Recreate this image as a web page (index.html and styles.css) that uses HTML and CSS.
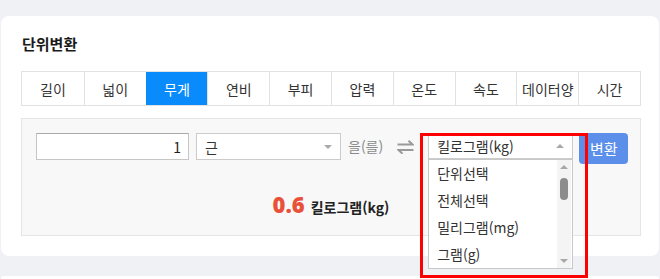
FILE: index.html
```html
<!DOCTYPE html>
<html lang="ko">
<head>
  <meta charset="UTF-8">
  <meta name="viewport" content="width=device-width, initial-scale=1">
  <title>단위변환</title>
  <link rel="stylesheet" href="styles.css">
</head>
<body>
  <section class="card">
    <h2 class="card-title">단위변환</h2>
    <nav class="tabs">
      <a href="#">길이</a>
      <a href="#">넓이</a>
      <a href="#" class="active">무게</a>
      <a href="#">연비</a>
      <a href="#">부피</a>
      <a href="#">압력</a>
      <a href="#">온도</a>
      <a href="#">속도</a>
      <a href="#">데이터양</a>
      <a href="#">시간</a>
    </nav>
    <div class="converter">
      <div class="row">
        <input class="num" type="text" value="1">
        <div class="pick from">
          <span>근</span>
          <i class="arrow down"></i>
        </div>
        <span class="josa">을(를)</span>
        <svg class="swap" width="17" height="14" viewBox="0 0 17 14">
          <path d="M0.5 4.5h15L11.5 0.8" fill="none" stroke="#9a9a9a" stroke-width="2"/>
          <path d="M16.5 10H1.5l4 3.7" fill="none" stroke="#9a9a9a" stroke-width="2"/>
        </svg>
        <div class="pick to">
          <span>킬로그램(kg)</span>
          <i class="arrow up"></i>
          <ul class="listbox">
            <li>단위선택</li>
            <li>전체선택</li>
            <li>밀리그램(mg)</li>
            <li>그램(g)</li>
          </ul>
          <div class="scroll">
            <i class="arrow up"></i>
            <b class="thumb"></b>
            <i class="arrow down"></i>
          </div>
        </div>
        <button class="btn">변환</button>
      </div>
      <p class="result"><strong>0.6</strong> 킬로그램(kg)</p>
    </div>
  </section>
  <section class="card next"></section>
  <div class="mark"></div>
</body>
</html>
```

FILE: styles.css
```css
body { margin: 0; background: #f0f1f5; font-family: "Noto Sans CJK KR", "Liberation Sans", sans-serif; color: #222; position: relative; }
.card { margin: 16px 1px 0; background: #fff; border-radius: 8px; padding: 16px 18px 20px 20px; }
.card.next { margin-top: 20px; height: 3px; padding: 0; border-radius: 8px 8px 0 0; }
.card-title { margin: 0 0 15px 1px; font-size: 15px; line-height: 24px; font-weight: 700; color: #1a1a1a; }
.tabs { display: grid; grid-template-columns: repeat(10, 1fr); height: 35px; border: 1px solid #e2e2e2; box-sizing: border-box; }
.tabs a { display: flex; align-items: center; justify-content: center; font-size: 14px; color: #333; text-decoration: none; border-left: 1px solid #e2e2e2; }
.tabs a:first-child { border-left: none; }
.tabs a.active { background: #0a8bfb; color: #fff; border-left-color: #0a8bfb; }
.converter { margin-top: 12px; height: 118px; box-sizing: border-box; border: 1px solid #e5e5e5; background: #f8f8f8; padding: 14px 14px 0; }
.row { display: flex; align-items: flex-start; }
.num { box-sizing: border-box; width: 153px; height: 27px; border: 1px solid #c6c6c6; border-top-color: #a9a9a9; text-align: right; font: 14px "Noto Sans CJK KR", sans-serif; padding: 0 7px; color: #222; margin: 0; flex: none; }
.pick { position: relative; flex: none; box-sizing: border-box; width: 145px; height: 27px; background: #fff; border: 1px solid #cbcbcb; display: flex; align-items: center; padding: 0 8px; font-size: 14px; color: #333; }
.pick.from { margin-left: 7px; padding-right: 8px; }
.pick.to { margin-left: 14px; height: 26px; }
.arrow { display: block; width: 0; height: 0; border-left: 4px solid transparent; border-right: 4px solid transparent; margin-left: auto; }
.arrow.down { border-top: 4px solid #a8a8a8; }
.arrow.up { border-bottom: 4px solid #a8a8a8; }
.josa { margin-left: 7px; line-height: 27px; font-size: 14px; color: #8a8a8a; white-space: nowrap; flex: none; }
.swap { margin: 7px 0 0 14px; flex: none; }
.listbox { position: absolute; left: -1px; top: 25px; width: 145px; margin: 0; padding: 0; list-style: none; box-sizing: border-box; height: 110px; background: #fff; border: 1px solid #c8c8c8; z-index: 2; }
.listbox li { height: 27px; line-height: 27px; padding-left: 8px; font-size: 14px; color: #333; }
.scroll { position: absolute; right: 1px; top: 26px; height: 108px; width: 14px; background: #f4f4f4; display: flex; flex-direction: column; align-items: center; padding: 5px 0; box-sizing: border-box; z-index: 3; }
.scroll .arrow { margin: 0; }
.scroll .arrow.down { margin-top: auto; }
.thumb { display: block; width: 8px; height: 22px; border-radius: 4px; background: #8c8c8c; margin-top: 9px; }
.btn { margin-left: 6px; flex: none; width: 49px; height: 31px; border: none; border-radius: 4px; background: #5b8fea; color: #fff; font: 15px "Noto Sans CJK KR", sans-serif; padding: 0; }
.result { margin: 25px 0 0; text-align: center; font-size: 14px; font-weight: 700; line-height: 30px; color: #222; }
.result strong { font-family: "Open Sans", "Liberation Sans", sans-serif; font-size: 22px; color: #e9503a; margin-right: 2px; }
.mark { position: absolute; left: 420px; top: 133px; width: 168px; height: 145px; box-sizing: border-box; border: 3px solid #f00; z-index: 5; }
```
